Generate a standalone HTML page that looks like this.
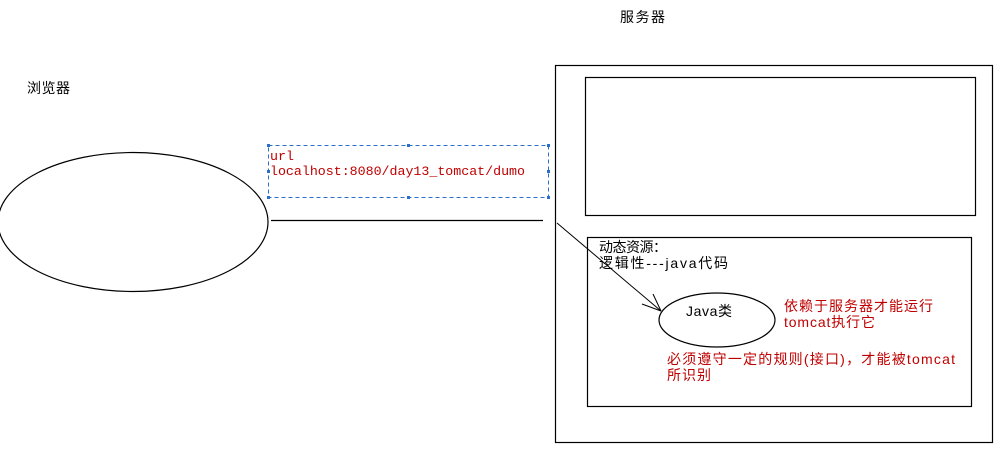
<!DOCTYPE html>
<html><head><meta charset="utf-8"><style>
html,body{margin:0;padding:0;background:#fff;width:997px;height:451px;overflow:hidden}
svg{display:block}
.cn{font-family:"Liberation Sans","Noto Sans CJK SC",sans-serif;font-size:14px}
.mono{font-family:"Liberation Mono","Noto Sans CJK SC",monospace;font-size:13.3px}
</style></head><body>
<svg width="997" height="451" viewBox="0 0 997 451" xmlns="http://www.w3.org/2000/svg">
<text x="620" y="22" class="cn" fill="#000" textLength="45">服务器</text>
<text x="27" y="93" class="cn" fill="#000" textLength="43">浏览器</text>
<ellipse cx="133" cy="222" rx="135" ry="69.5" fill="none" stroke="#000" stroke-width="1.2"/>
<rect x="268.5" y="145.5" width="280" height="52" fill="none" stroke="#2a6fc9" stroke-width="1" stroke-dasharray="4,3"/>
<g fill="#2a6fc9">
<rect x="267" y="144" width="3" height="3"/><rect x="407" y="144" width="3" height="3"/><rect x="547" y="144" width="3" height="3"/>
<rect x="267" y="170" width="3" height="3"/><rect x="547" y="170" width="3" height="3"/>
<rect x="267" y="196" width="3" height="3"/><rect x="407" y="196" width="3" height="3"/><rect x="547" y="196" width="3" height="3"/>
</g>
<text x="270" y="160" class="mono" fill="#c00000">url</text>
<text x="270" y="175" class="mono" fill="#c00000" textLength="255">localhost:8080/day13_tomcat/dumo</text>
<line x1="271" y1="220.5" x2="543" y2="220.5" stroke="#000" stroke-width="1.2"/>
<rect x="555.5" y="65.5" width="437" height="377" fill="none" stroke="#000" stroke-width="1.2"/>
<rect x="585.5" y="77.5" width="390" height="138" fill="none" stroke="#000" stroke-width="1.2"/>
<rect x="587.5" y="237.5" width="384" height="169" fill="none" stroke="#000" stroke-width="1.2"/>
<text x="599" y="252" class="cn" fill="#000" textLength="68">动态资源：</text>
<text x="599" y="268" class="cn" fill="#000" textLength="129">逻辑性---java代码</text>
<line x1="557" y1="223" x2="661" y2="311" stroke="#000" stroke-width="1"/>
<line x1="661" y1="311" x2="642" y2="304" stroke="#000" stroke-width="1"/>
<line x1="661" y1="311" x2="653" y2="294" stroke="#000" stroke-width="1"/>
<ellipse cx="717" cy="320" rx="58" ry="27" fill="none" stroke="#000" stroke-width="1.2"/>
<text x="686" y="316" class="cn" fill="#000" textLength="46">Java类</text>
<text x="784" y="311" class="cn" fill="#c00000" textLength="149">依赖于服务器才能运行</text>
<text x="784" y="327" class="cn" fill="#c00000" textLength="91">tomcat执行它</text>
<text x="667" y="364" class="cn" fill="#c00000" textLength="288">必须遵守一定的规则(接口)，才能被tomcat</text>
<text x="667" y="380" class="cn" fill="#c00000" textLength="44">所识别</text>
</svg>
</body></html>
